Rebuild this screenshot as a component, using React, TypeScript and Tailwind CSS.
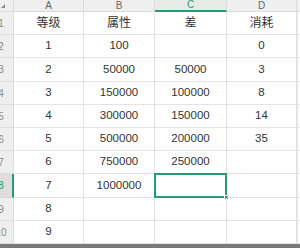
const cols = ["A", "B", "C", "D"];
const rowHeights = [23, 23, 24, 23, 23, 23, 23, 24, 23, 23];

const data: string[][] = [
  ["等级", "属性", "差", "消耗"],
  ["1", "100", "", "0"],
  ["2", "50000", "50000", "3"],
  ["3", "150000", "100000", "8"],
  ["4", "300000", "150000", "14"],
  ["5", "500000", "200000", "35"],
  ["6", "750000", "250000", ""],
  ["7", "1000000", "", ""],
  ["8", "", "", ""],
  ["9", "", "", ""],
];

const ACTIVE_ROW = 7;
const ACTIVE_COL = 2;

const App = () => {
  return (
    <div
      className="w-[300px] h-[248px] overflow-hidden bg-white text-[#333]"
      style={{ fontFamily: '"Liberation Sans", "Noto Sans CJK SC", sans-serif' }}
    >
      <div className="grid grid-cols-[14px_70px_71px_72px_70px_3px]">
        {/* column headers */}
        <div className="relative h-[12px] bg-[#efefef] border-r border-b border-[#dcdcdc]">
          <span className="absolute left-[1px] top-[4px] w-0 h-0 border-l-[4px] border-l-transparent border-b-[4px] border-b-[#8a8a8a]" />
        </div>
        {cols.map((c, i) => (
          <div
            key={c}
            className={
              i === ACTIVE_COL
                ? "h-[12px] flex items-center justify-center text-[10px] leading-none bg-[#e6ebe8] text-[#279b73] border-r border-[#dcdcdc] border-b-2 border-b-[#279b73]"
                : "h-[12px] flex items-center justify-center text-[10px] leading-none bg-[#efefef] text-[#666] border-r border-b border-[#dcdcdc]"
            }
          >
            {c}
          </div>
        ))}
        <div className="h-[12px] bg-[#efefef] border-b border-[#dcdcdc]" />

        {data.map((row, r) => (
          <>
            <div
              key={`h${r}`}
              className={
                r === ACTIVE_ROW
                  ? "relative overflow-hidden bg-[#dedede] border-b border-[#d6d6d6] border-r-2 border-r-[#279b73]"
                  : "relative overflow-hidden bg-[#efefef] border-b border-r border-[#dcdcdc]"
              }
              style={{ height: rowHeights[r] }}
            >
              <span
                className={
                  "absolute left-[-14px] w-[30px] top-0 bottom-0 flex items-center justify-center text-[10px] " +
                  (r === ACTIVE_ROW ? "text-[#279b73]" : "text-[#8a8a8a]")
                }
              >
                {r + 1}
              </span>
            </div>
            {row.map((v, c) => (
              <div
                key={`c${r}-${c}`}
                className={
                  "relative flex items-center justify-center border-r border-b border-[#e4e4e4] " +
                  (r === 0 ? "text-[12px]" : "text-[11.5px]")
                }
                style={{ height: rowHeights[r] }}
              >
                {v}
                {r === ACTIVE_ROW && c === ACTIVE_COL && (
                  <div className="absolute left-[-1px] top-[-1px] right-[-1px] bottom-[-1px] border-2 border-[#279b73]">
                    <span className="absolute right-[-4px] bottom-[-4px] w-[5px] h-[5px] bg-[#279b73] border border-white" />
                  </div>
                )}
              </div>
            ))}
            <div
              key={`e${r}`}
              className="border-l border-b border-[#e4e4e4] bg-white"
              style={{ height: rowHeights[r] }}
            />
          </>
        ))}
      </div>
      <div className="h-[4px] bg-[#7a7a7a]" />
    </div>
  );
};

export default App;
